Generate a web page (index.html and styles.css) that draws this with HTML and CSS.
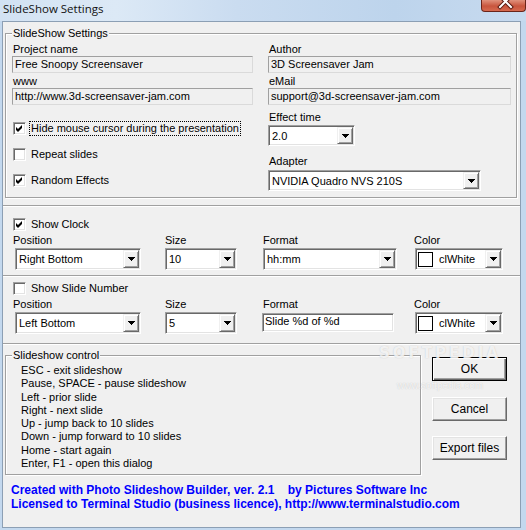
FILE: index.html
```html
<!DOCTYPE html>
<html>
<head>
<meta charset="utf-8">
<title>SlideShow Settings</title>
<link rel="stylesheet" href="styles.css">
</head>
<body>
<div class="window">
  <div class="titlebar">
    <span class="title">SlideShow Settings</span>
    <div class="close">
      <svg width="45" height="11" viewBox="0 0 45 11">
        <path d="M18 -4 L29 7 M29 -4 L18 7" stroke="#5a1a10" stroke-width="4" stroke-linecap="square" fill="none"/>
        <path d="M18 -4 L29 7 M29 -4 L18 7" stroke="#ffffff" stroke-width="2" stroke-linecap="square" fill="none"/>
      </svg>
    </div>
  </div>
  <div class="client">
    <div class="p-settings">
      <fieldset class="group settings">
        <legend>SlideShow Settings</legend>
        <div class="grid2">
          <div class="col">
            <div class="lbl">Project name</div>
            <div class="ro">Free Snoopy Screensaver</div>
            <div class="lbl mt2">www</div>
            <div class="ro">http://www.3d-screensaver-jam.com</div>
            <div class="checks">
              <div class="chk-row in-group">
                <span class="cb"><svg width="13" height="13" viewBox="0 0 13 13"><path d="M3 5 L5 7 L9 3 L9 6 L5 10 L3 8 Z" fill="#000"/></svg></span>
                <span class="cb-label focus">Hide mouse cursor during the presentation</span>
              </div>
              <div class="chk-row in-group">
                <span class="cb"></span>
                <span class="cb-label">Repeat slides</span>
              </div>
              <div class="chk-row in-group">
                <span class="cb"><svg width="13" height="13" viewBox="0 0 13 13"><path d="M3 5 L5 7 L9 3 L9 6 L5 10 L3 8 Z" fill="#000"/></svg></span>
                <span class="cb-label">Random Effects</span>
              </div>
            </div>
          </div>
          <div class="col">
            <div class="lbl">Author</div>
            <div class="ro">3D Screensaver Jam</div>
            <div class="lbl mt2">eMail</div>
            <div class="ro">support@3d-screensaver-jam.com</div>
            <div class="lbl mt6">Effect time</div>
            <div class="combo c-effect"><span class="val">2.0</span><span class="dd"><svg width="7" height="4" viewBox="0 0 7 4"><path d="M0 0h7v1h-1v1h-1v1h-1v1h-1v-1h-1v-1h-1v-1h-1z" fill="#000"/></svg></span></div>
            <div class="lbl mt9">Adapter</div>
            <div class="combo c-adapter"><span class="val">NVIDIA Quadro NVS 210S</span><span class="dd"><svg width="7" height="4" viewBox="0 0 7 4"><path d="M0 0h7v1h-1v1h-1v1h-1v1h-1v-1h-1v-1h-1v-1h-1z" fill="#000"/></svg></span></div>
          </div>
        </div>
      </fieldset>
    </div>

    <div class="panel-sec clock">
      <div class="chk-row">
        <span class="cb"><svg width="13" height="13" viewBox="0 0 13 13"><path d="M3 5 L5 7 L9 3 L9 6 L5 10 L3 8 Z" fill="#000"/></svg></span>
        <span class="cb-label">Show Clock</span>
      </div>
      <div class="fields">
        <div class="lbl">Position</div>
        <div class="lbl">Size</div>
        <div class="lbl">Format</div>
        <div class="lbl">Color</div>
        <div class="combo c-pos"><span class="val">Right Bottom</span><span class="dd"><svg width="7" height="4" viewBox="0 0 7 4"><path d="M0 0h7v1h-1v1h-1v1h-1v1h-1v-1h-1v-1h-1v-1h-1z" fill="#000"/></svg></span></div>
        <div class="combo c-size"><span class="val">10</span><span class="dd"><svg width="7" height="4" viewBox="0 0 7 4"><path d="M0 0h7v1h-1v1h-1v1h-1v1h-1v-1h-1v-1h-1v-1h-1z" fill="#000"/></svg></span></div>
        <div class="combo c-fmt"><span class="val">hh:mm</span><span class="dd"><svg width="7" height="4" viewBox="0 0 7 4"><path d="M0 0h7v1h-1v1h-1v1h-1v1h-1v-1h-1v-1h-1v-1h-1z" fill="#000"/></svg></span></div>
        <div class="combo c-col"><span class="val"><span class="swatch"></span>clWhite</span><span class="dd"><svg width="7" height="4" viewBox="0 0 7 4"><path d="M0 0h7v1h-1v1h-1v1h-1v1h-1v-1h-1v-1h-1v-1h-1z" fill="#000"/></svg></span></div>
      </div>
    </div>

    <div class="panel-sec slidenum">
      <div class="chk-row">
        <span class="cb"></span>
        <span class="cb-label">Show Slide Number</span>
      </div>
      <div class="fields">
        <div class="lbl">Position</div>
        <div class="lbl">Size</div>
        <div class="lbl">Format</div>
        <div class="lbl">Color</div>
        <div class="combo c-pos"><span class="val">Left Bottom</span><span class="dd"><svg width="7" height="4" viewBox="0 0 7 4"><path d="M0 0h7v1h-1v1h-1v1h-1v1h-1v-1h-1v-1h-1v-1h-1z" fill="#000"/></svg></span></div>
        <div class="combo c-size"><span class="val">5</span><span class="dd"><svg width="7" height="4" viewBox="0 0 7 4"><path d="M0 0h7v1h-1v1h-1v1h-1v1h-1v-1h-1v-1h-1v-1h-1z" fill="#000"/></svg></span></div>
        <div class="edit">Slide %d of %d</div>
        <div class="combo c-col"><span class="val"><span class="swatch"></span>clWhite</span><span class="dd"><svg width="7" height="4" viewBox="0 0 7 4"><path d="M0 0h7v1h-1v1h-1v1h-1v1h-1v-1h-1v-1h-1v-1h-1z" fill="#000"/></svg></span></div>
      </div>
    </div>

    <div class="bottom">
      <fieldset class="group control">
        <legend>Slideshow control</legend>
        <div class="lines">
          <div>ESC - exit slideshow</div>
          <div>Pause, SPACE - pause slideshow</div>
          <div>Left - prior slide</div>
          <div>Right - next slide</div>
          <div>Up - jump back to 10 slides</div>
          <div>Down - jump forward to 10 slides</div>
          <div>Home - start again</div>
          <div>Enter, F1 - open this dialog</div>
        </div>
      </fieldset>
      <div class="buttons">
        <div class="btn default"><span class="btn-text">OK</span></div>
        <div class="btn b-cancel"><span class="btn-text">Cancel</span></div>
        <div class="btn b-export"><span class="btn-text">Export files</span></div>
      </div>
    </div>

    <div class="footer">Created with Photo Slideshow Builder, ver. 2.1    by Pictures Software Inc
Licensed to Terminal Studio (business licence), http://www.terminalstudio.com</div>
  </div>
</div>
<div class="watermark">
  <div class="wm-big">SOFTPEDIA</div>
  <div class="wm-small">www.softpedia.com</div>
</div>
</body>
</html>
```

FILE: styles.css
```css
* { box-sizing: border-box; }

body {
  margin: 0;
  width: 526px;
  height: 530px;
  overflow: hidden;
  position: relative;
  background: #c3d8ee;
  font-family: "Liberation Sans", Arial, sans-serif;
  font-size: 11px;
  color: #000;
}

.window {
  width: 526px;
  height: 530px;
  display: flex;
  flex-direction: column;
}

.titlebar {
  height: 21px;
  flex: none;
  display: flex;
  justify-content: space-between;
  align-items: flex-start;
  background: linear-gradient(90deg, #d2e2f3 0%, #dce9f6 22%, #cadcf0 45%, #bdd4ec 75%, #c7daef 100%);
}

.title {
  font-family: "Open Sans", "Noto Sans", sans-serif;
  font-size: 11.5px;
  line-height: 16px;
  padding: 1px 0 0 3px;
  color: #111;
}

.close {
  width: 45px;
  height: 12px;
  border: 1px solid #6b2419;
  border-top: none;
  border-radius: 0 0 4px 4px;
  background: linear-gradient(#e0917c, #c8553d 55%, #d66a50);
  overflow: hidden;
}
.close svg { display: block; }

.client {
  flex: 1;
  margin: 0 5px 2px 2px;
  border: 1px solid #8c9fb4;
  background: #f0f0f0;
  display: flex;
  flex-direction: column;
}

/* group boxes */
fieldset.group {
  margin: 0;
  min-width: 0;
  border: 1px solid #a0a0a0;
  box-shadow: inset 1px 1px 0 #fff, 1px 1px 0 #fff;
  padding: 3px 5px 6px 6px;
}
fieldset.group legend {
  padding: 0 1px;
  line-height: 13px;
  background: #f0f0f0;
}

.p-settings { padding: 5px 3px 7px 2px; }

.grid2 {
  display: grid;
  grid-template-columns: 241px 243px;
  column-gap: 15px;
}

.lbl {
  line-height: 13px;
  padding-left: 1px;
  white-space: nowrap;
}
.mt2 { margin-top: 2px; }
.mt6 { margin-top: 6px; }
.mt9 { margin-top: 9px; }

.ro {
  height: 17px;
  line-height: 15px;
  padding: 0 2px;
  background: #f0f0f0;
  border: 1px solid;
  border-color: #a0a0a0 #dadada #dadada #a0a0a0;
  white-space: nowrap;
  overflow: hidden;
}

/* checkboxes */
.checks {
  margin-top: 17px;
  display: flex;
  flex-direction: column;
  gap: 13px;
}
.chk-row {
  display: flex;
  align-items: center;
  height: 13px;
}
.chk-row.in-group { padding-left: 1px; }
.cb {
  width: 13px;
  height: 13px;
  flex: none;
  background: #fff;
  border: 1px solid;
  border-color: #a0a0a0 #fff #fff #a0a0a0;
  box-shadow: inset 1px 1px 0 #696969, inset -1px -1px 0 #e3e3e3;
  position: relative;
}
.cb svg { position: absolute; left: -1px; top: -1px; }
.cb-label {
  margin-left: 3px;
  padding: 0 1px;
  border: 1px dotted transparent;
  line-height: 13px;
  white-space: nowrap;
}
.cb-label.focus { border-color: #000; }

/* combos */
.combo {
  display: flex;
  background: #fff;
  border: 1px solid;
  border-color: #a0a0a0 #fff #fff #a0a0a0;
  box-shadow: inset 1px 1px 0 #696969, inset -1px -1px 0 #e3e3e3;
  padding: 1px;
  height: 22px;
}
.combo .val {
  flex: 1;
  display: flex;
  align-items: center;
  padding-left: 2px;
  white-space: nowrap;
  overflow: hidden;
}
.combo .dd {
  width: 16px;
  flex: none;
  display: flex;
  align-items: center;
  justify-content: center;
  background: #f0f0f0;
  border: 1px solid;
  border-color: #f0f0f0 #696969 #696969 #f0f0f0;
  box-shadow: inset 1px 1px 0 #fff, inset -1px -1px 0 #a0a0a0;
}
.combo .dd svg { display: block; }

.c-effect { width: 87px; height: 21px; margin-top: 1px; }
.c-adapter { width: 213px; height: 21px; margin-top: 2px; }

.swatch {
  width: 15px;
  height: 15px;
  flex: none;
  border: 1px solid #000;
  background: #fff;
  margin: 0 6px 0 -1px;
}

/* clock / slide number sections */
.panel-sec {
  border-top: 1px solid #a0a0a0;
  box-shadow: inset 0 1px 0 #fff;
  padding: 12px 0 5px 10px;
}
.slidenum {
  padding: 6px 0 9px 10px;
  border-bottom: 1px solid #a0a0a0;
  box-shadow: inset 0 1px 0 #fff, 0 1px 0 #fff;
}

.fields {
  display: grid;
  grid-template-columns: 152px 98px 151px 1fr;
  row-gap: 1px;
  margin-top: 3px;
}
.fields .lbl { padding-left: 0; }
.c-pos { margin-left: 2px; width: 126px; }
.c-size { width: 72px; }
.c-fmt { width: 134px; }
.c-col { margin-left: 1px; width: 88px; }

.edit {
  width: 132px;
  height: 19px;
  margin-top: 1px;
  margin-left: -1px;
  padding: 0 2px;
  line-height: 15px;
  background: #fff;
  border: 1px solid;
  border-color: #a0a0a0 #fff #fff #a0a0a0;
  box-shadow: inset 1px 1px 0 #696969, inset -1px -1px 0 #e3e3e3;
  white-space: nowrap;
}

/* bottom area */
.bottom {
  display: flex;
  align-items: flex-start;
  padding-left: 2px;
}
fieldset.control {
  margin-top: 5px;
  width: 416px;
  padding: 2px 5px 4px 6px;
}
.control .lines {
  padding-left: 9px;
  line-height: 13.3px;
}

.buttons {
  margin-left: 11px;
  margin-top: 13px;
  width: 75px;
  display: flex;
  flex-direction: column;
}
.btn {
  height: 24px;
  display: flex;
  align-items: center;
  justify-content: center;
  background: #f0f0f0;
  border: 1px solid;
  border-color: #fff #696969 #696969 #fff;
  box-shadow: inset -1px -1px 0 #a0a0a0, inset 1px 1px 0 #e3e3e3;
  font-size: 12px;
}
.btn-text { line-height: 11px; display: block; }
.btn.default {
  border: 1px solid #000;
  box-shadow: inset 1px 1px 0 #fff, inset -1px -1px 0 #696969, inset -2px -2px 0 #a0a0a0;
}
.b-cancel { margin-top: 16px; }
.b-export { margin-top: 15px; }

.footer {
  margin-top: 8px;
  padding-left: 8px;
  color: #0000ff;
  font-weight: bold;
  font-size: 12px;
  line-height: 14px;
  white-space: pre;
}

/* watermark overlay */
.watermark {
  position: absolute;
  left: 372px;
  top: 346px;
  width: 136px;
  text-align: center;
  pointer-events: none;
}
.wm-big {
  font-family: "DejaVu Sans", sans-serif;
  font-weight: bold;
  font-size: 15px;
  line-height: 14px;
  letter-spacing: 3px;
  color: rgba(255, 255, 255, 0.8);
  text-shadow: 0 0 1px rgba(150, 150, 150, 0.55);
}
.wm-small {
  font-size: 10px;
  line-height: 12px;
  margin-top: 20px;
  color: rgba(255, 255, 255, 0.8);
  text-shadow: 0 0 1px rgba(150, 150, 150, 0.55);
}
```
